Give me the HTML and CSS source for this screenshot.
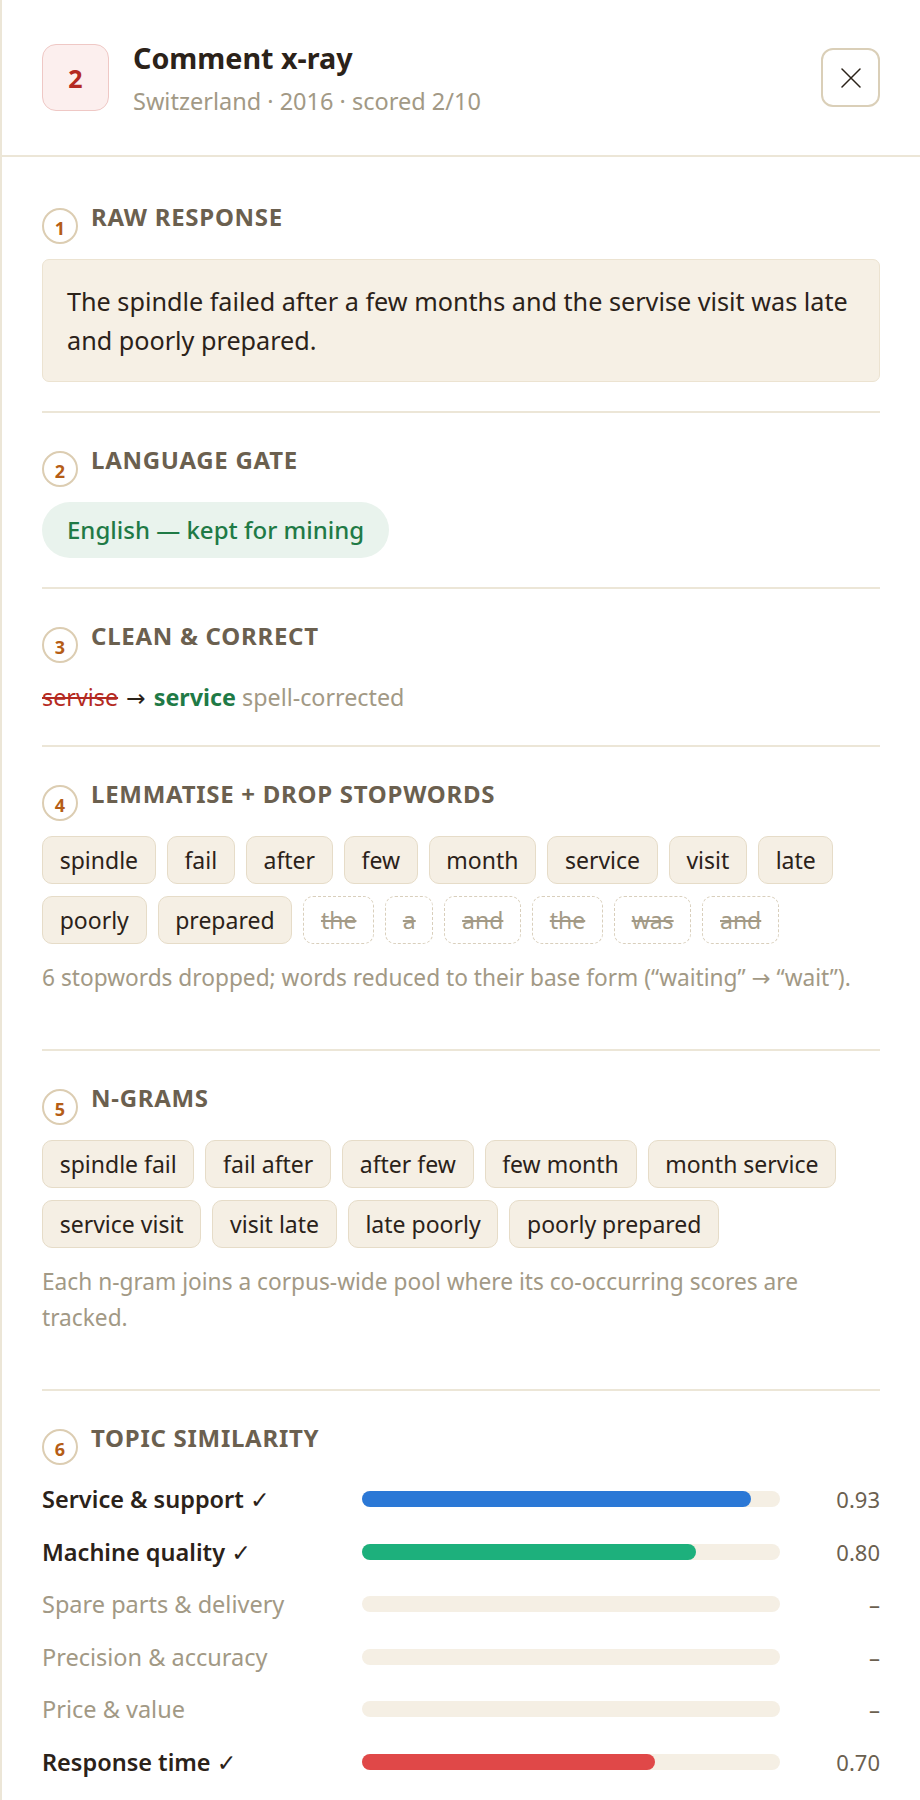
FILE: index.html
```html
<!DOCTYPE html>
<html lang="en">
<head>
<meta charset="utf-8">
<title>Comment x-ray</title>
<link rel="stylesheet" href="styles.css">
</head>
<body>
<aside class="panel">
  <header class="head">
    <div class="score">2</div>
    <div class="head-text">
      <h1 class="title">Comment x-ray</h1>
      <p class="meta">Switzerland · 2016 · scored 2/10</p>
    </div>
    <button class="close" aria-label="Close">
      <svg width="20" height="20" viewBox="0 0 20 20"><path d="M1 1L19 19M19 1L1 19" stroke="#2b2219" stroke-width="1.5" stroke-linecap="round"/></svg>
    </button>
  </header>

  <div class="body">
    <section class="step">
      <div class="step-head"><span class="num">1</span><h2>Raw response</h2></div>
      <div class="raw">The spindle failed after a few months and the servise visit was late and poorly prepared.</div>
    </section>

    <section class="step">
      <div class="step-head"><span class="num">2</span><h2>Language gate</h2></div>
      <span class="pill">English — kept for mining</span>
    </section>

    <section class="step">
      <div class="step-head"><span class="num">3</span><h2>Clean &amp; correct</h2></div>
      <div class="fix"><span class="old">servise</span> <span class="arrow">→</span> <span class="new">service</span> <span class="tag">spell-corrected</span></div>
    </section>

    <section class="step">
      <div class="step-head"><span class="num">4</span><h2>Lemmatise + drop stopwords</h2></div>
      <div class="chips">
        <span class="chip">spindle</span>
        <span class="chip">fail</span>
        <span class="chip">after</span>
        <span class="chip">few</span>
        <span class="chip">month</span>
        <span class="chip">service</span>
        <span class="chip">visit</span>
        <span class="chip">late</span>
        <span class="chip">poorly</span>
        <span class="chip">prepared</span>
        <span class="chip drop">the</span>
        <span class="chip drop">a</span>
        <span class="chip drop">and</span>
        <span class="chip drop">the</span>
        <span class="chip drop">was</span>
        <span class="chip drop">and</span>
      </div>
      <p class="note">6 stopwords dropped; words reduced to their base form (“waiting” → “wait”).</p>
    </section>

    <section class="step">
      <div class="step-head"><span class="num">5</span><h2>N-grams</h2></div>
      <div class="chips">
        <span class="chip">spindle fail</span>
        <span class="chip">fail after</span>
        <span class="chip">after few</span>
        <span class="chip">few month</span>
        <span class="chip">month service</span>
        <span class="chip">service visit</span>
        <span class="chip">visit late</span>
        <span class="chip">late poorly</span>
        <span class="chip">poorly prepared</span>
      </div>
      <p class="note">Each n-gram joins a corpus-wide pool where its co-occurring scores are tracked.</p>
    </section>

    <section class="step last">
      <div class="step-head"><span class="num">6</span><h2>Topic similarity</h2></div>
      <div class="topics">
        <span class="label on">Service &amp; support ✓</span>
        <span class="track"><span class="fill blue" style="width:93%"></span></span>
        <span class="val">0.93</span>

        <span class="label on">Machine quality ✓</span>
        <span class="track"><span class="fill green" style="width:80%"></span></span>
        <span class="val">0.80</span>

        <span class="label">Spare parts &amp; delivery</span>
        <span class="track"></span>
        <span class="val">–</span>

        <span class="label">Precision &amp; accuracy</span>
        <span class="track"></span>
        <span class="val">–</span>

        <span class="label">Price &amp; value</span>
        <span class="track"></span>
        <span class="val">–</span>

        <span class="label on">Response time ✓</span>
        <span class="track"><span class="fill red" style="width:70%"></span></span>
        <span class="val">0.70</span>
      </div>
    </section>
  </div>
</aside>
</body>
</html>
```

FILE: styles.css
```css
html, body {
  margin: 0;
  padding: 0;
  background: #ffffff;
}

body {
  font-family: "Noto Sans", "Open Sans", "DejaVu Sans", sans-serif;
  color: #2b2219;
}

.panel {
  border-left: 2px solid #ece6d7;
  min-height: 1800px;
  box-sizing: border-box;
}

/* header */
.head {
  display: flex;
  align-items: center;
  height: 155px;
  padding: 0 40px;
  border-bottom: 2px solid #ece6d7;
}

.score {
  flex: none;
  width: 67px;
  height: 67px;
  box-sizing: border-box;
  border: 1.5px solid #efc8c5;
  background: #fcefee;
  border-radius: 14px;
  display: flex;
  align-items: center;
  justify-content: center;
  color: #b42a22;
  font-weight: 700;
  font-size: 25px;
}

.head-text {
  flex: 1;
  margin-left: 24px;
}

.title {
  margin: 0;
  font-size: 28.7px;
  font-weight: 700;
  line-height: 36px;
  color: #2b2219;
}

.meta {
  margin: 10px 0 0;
  font-size: 23.5px;
  line-height: 30px;
  color: #a29985;
}

.close {
  flex: none;
  width: 59px;
  height: 59px;
  box-sizing: border-box;
  border: 2px solid #dacfb8;
  border-radius: 12px;
  background: #ffffff;
  display: flex;
  align-items: center;
  justify-content: center;
  padding: 0;
}

/* body */
.body {
  padding: 13px 40px 0;
}

.step {
  padding: 32px 0 29px;
  border-bottom: 2px solid #ece6d7;
}

.step.last {
  border-bottom: none;
}

.step-head {
  display: flex;
  align-items: flex-start;
  gap: 13px;
  margin-bottom: 15px;
}

.num {
  flex: none;
  width: 36px;
  height: 36px;
  box-sizing: border-box;
  margin-top: 6px;
  padding-top: 3px;
  border: 2px solid #dccdb2;
  border-radius: 50%;
  display: flex;
  align-items: center;
  justify-content: center;
  color: #b55d16;
  font-weight: 700;
  font-size: 18px;
}

.step-head h2 {
  margin: 0;
  font-size: 24px;
  line-height: 30px;
  font-weight: 700;
  text-transform: uppercase;
  letter-spacing: 0.03em;
  color: #6b604f;
}

.raw {
  background: #f6f0e5;
  border: 1.5px solid #ece3d1;
  border-radius: 7px;
  padding: 21.5px 24px;
  font-size: 25.2px;
  line-height: 39px;
  color: #2b2219;
}

.pill {
  display: inline-block;
  background: #e9f3ed;
  color: #1f7a46;
  font-weight: 500;
  font-size: 24px;
  line-height: 32px;
  padding: 12px 25px;
  border-radius: 28px;
}

.fix {
  font-size: 23.3px;
  line-height: 38px;
}

.fix .old {
  color: #b42a22;
  text-decoration: line-through;
}

.fix .arrow {
  color: #2b2219;
  margin: 0 2px;
}

.fix .new {
  color: #1f7a46;
  font-weight: 700;
}

.fix .tag {
  color: #a29985;
}

.chips {
  display: flex;
  flex-wrap: wrap;
  gap: 12px 11px;
}

.chip {
  font-size: 23px;
  line-height: 30px;
  padding: 8px 16.7px;
  border: 1.5px solid #e6dcc8;
  background: #f5efe4;
  border-radius: 10px;
  color: #2b2219;
}

.chip.drop {
  background: #ffffff;
  border-style: dashed;
  border-color: #d9cfbc;
  color: #a39a86;
  text-decoration: line-through;
}

.note {
  margin: 16px 0 24px;
  font-size: 22.7px;
  line-height: 36px;
  color: #a29985;
}

/* topic similarity */
.topics {
  display: grid;
  grid-template-columns: 300px 1fr 80px;
  column-gap: 20px;
  row-gap: 20.5px;
  align-items: center;
  margin-top: 18px;
}

.label {
  font-size: 23.5px;
  line-height: 32px;
  color: #a29985;
}

.label.on {
  color: #2b2219;
  font-weight: 600;
}

.track {
  display: block;
  height: 16px;
  border-radius: 8px;
  background: #f5efe4;
}

.fill {
  display: block;
  height: 100%;
  border-radius: 8px;
}

.fill.blue { background: #2b78d6; }
.fill.green { background: #1db07c; }
.fill.red { background: #e04848; }

.val {
  text-align: right;
  font-size: 22px;
  line-height: 32px;
  color: #6b604f;
}
```
